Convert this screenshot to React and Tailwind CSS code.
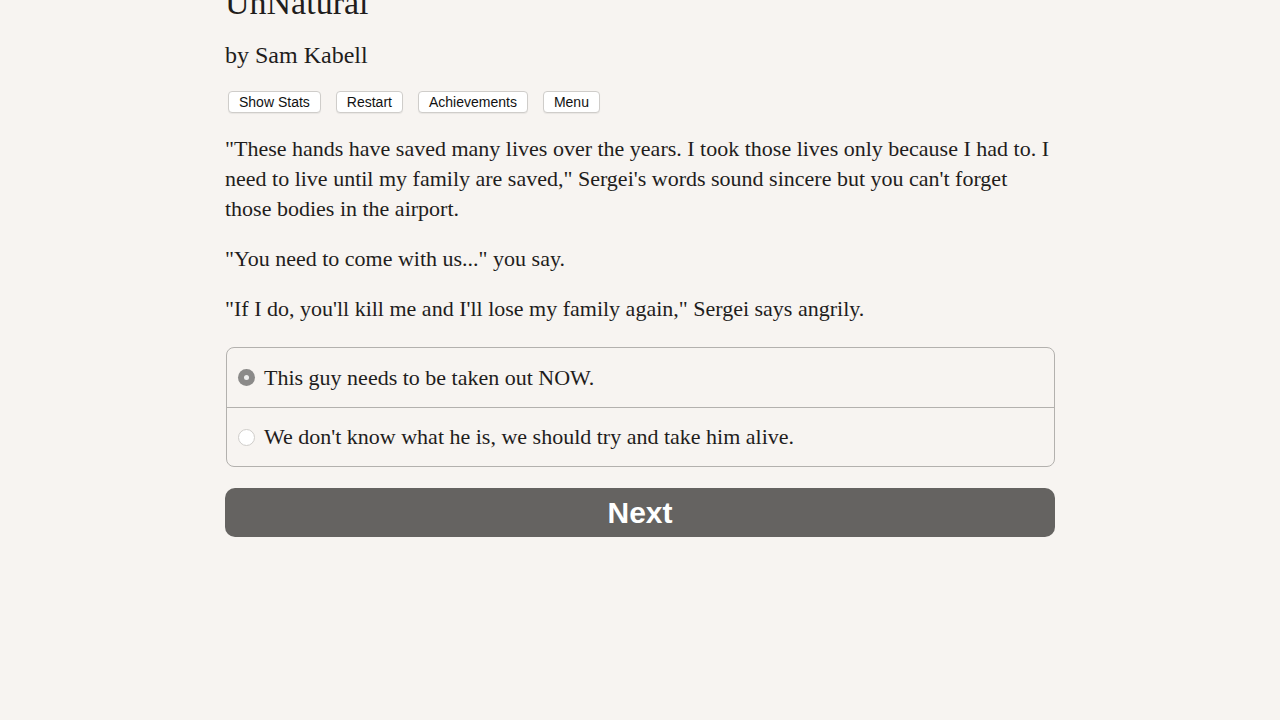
import React from "react";

const serif = { fontFamily: '"Liberation Serif", "Times New Roman", serif' };
const sans = { fontFamily: '"Liberation Sans", Arial, sans-serif' };

function TopButton({ children }) {
  return (
    <button
      className="h-[22px] px-[10px] rounded-[4px] border border-[#cfcdca] bg-white text-[14px] leading-[20px] text-[#111] shadow-[0_1px_1px_rgba(0,0,0,0.06)]"
      style={sans}
    >
      {children}
    </button>
  );
}

function Radio({ checked }) {
  if (checked) {
    return (
      <span className="w-[17px] h-[17px] rounded-full bg-[#8b8a89] flex items-center justify-center shrink-0">
        <span className="w-[5px] h-[5px] rounded-full bg-[#eeeeee]" />
      </span>
    );
  }
  return (
    <span className="w-[17px] h-[17px] rounded-full bg-white border border-[#cfcdca] shrink-0" />
  );
}

export default function App() {
  return (
    <div className="min-h-[720px] w-full bg-[#f7f4f1] overflow-hidden">
      <div className="w-[830px] mx-auto text-[#1f1d1c]" style={serif}>
        <div className="-mt-[17px] text-[34px] leading-[40px]">UnNatural</div>
        <div className="mt-[17px] text-[24px] leading-[30px]">by Sam Kabell</div>
        <div className="mt-[21px] flex gap-[15px] pl-[3px]">
          <TopButton>Show Stats</TopButton>
          <TopButton>Restart</TopButton>
          <TopButton>Achievements</TopButton>
          <TopButton>Menu</TopButton>
        </div>
        <div className="mt-[21px] text-[22px] leading-[30px]">
          <p className="mb-[20px] whitespace-nowrap">
            "These hands have saved many lives over the years. I took those lives only because I had to. I
            <br />
            need to live until my family are saved," Sergei's words sound sincere but you can't forget
            <br />
            those bodies in the airport.
          </p>
          <p className="mb-[20px]">"You need to come with us..." you say.</p>
          <p>"If I do, you'll kill me and I'll lose my family again," Sergei says angrily.</p>
        </div>
        <div className="mt-[23px] ml-[1px] w-[829px] rounded-[8px] border border-[#b3b1ae] overflow-hidden">
          <div className="h-[59px] flex items-center gap-[9px] pl-[11px] text-[22px] leading-[30px]">
            <Radio checked />
            <span className="whitespace-nowrap">This guy needs to be taken out NOW.</span>
          </div>
          <div className="h-px bg-[#b3b1ae]" />
          <div className="h-[58px] flex items-center gap-[9px] pl-[11px] text-[22px] leading-[30px]">
            <Radio />
            <span className="whitespace-nowrap">We don't know what he is, we should try and take him alive.</span>
          </div>
        </div>
        <button
          className="mt-[21px] w-[830px] h-[49px] rounded-[10px] bg-[#656361] text-white text-[30px] font-bold leading-none flex items-center justify-center"
          style={sans}
        >
          Next
        </button>
      </div>
    </div>
  );
}
